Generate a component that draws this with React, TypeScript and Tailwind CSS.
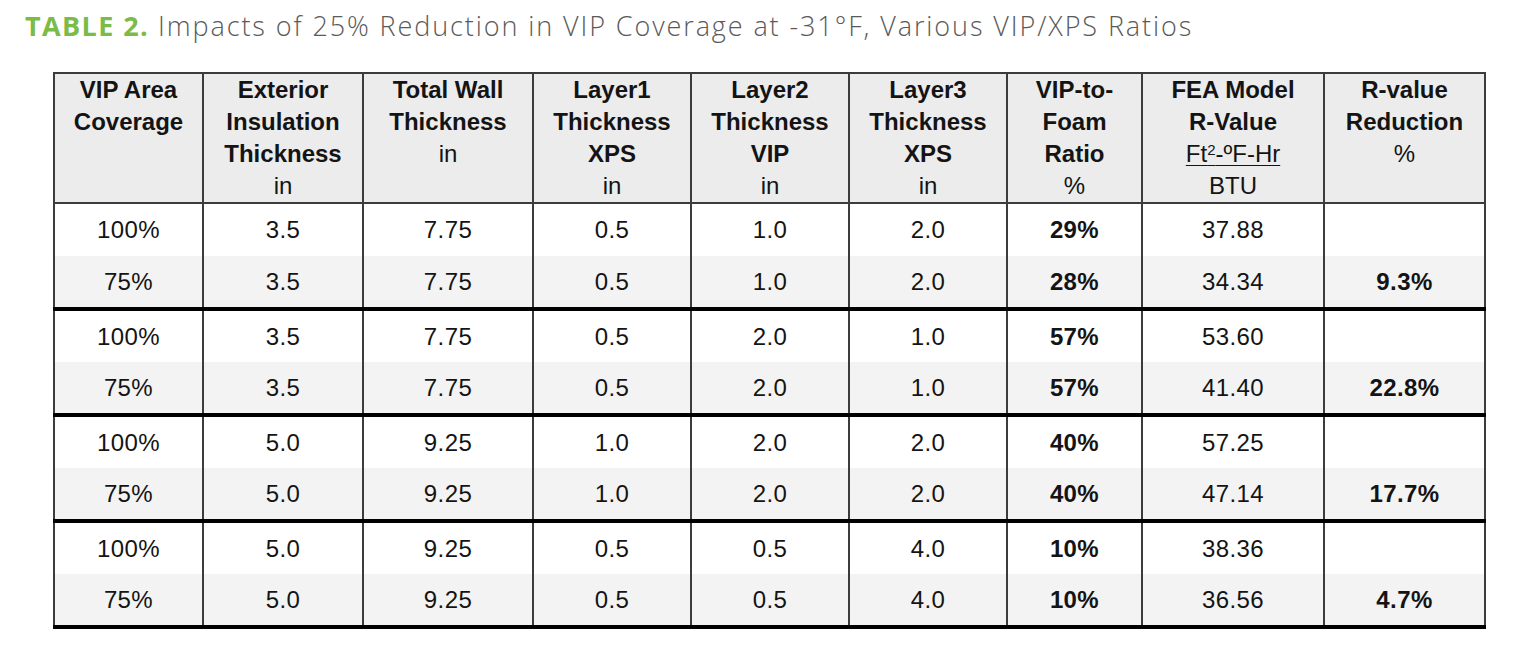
import React from "react";

type Row = {
  cov: string;
  ext: string;
  total: string;
  l1: string;
  l2: string;
  l3: string;
  ratio: string;
  r: string;
  red: string;
};

const groups: Row[][] = [
  [
    { cov: "100%", ext: "3.5", total: "7.75", l1: "0.5", l2: "1.0", l3: "2.0", ratio: "29%", r: "37.88", red: "" },
    { cov: "75%", ext: "3.5", total: "7.75", l1: "0.5", l2: "1.0", l3: "2.0", ratio: "28%", r: "34.34", red: "9.3%" },
  ],
  [
    { cov: "100%", ext: "3.5", total: "7.75", l1: "0.5", l2: "2.0", l3: "1.0", ratio: "57%", r: "53.60", red: "" },
    { cov: "75%", ext: "3.5", total: "7.75", l1: "0.5", l2: "2.0", l3: "1.0", ratio: "57%", r: "41.40", red: "22.8%" },
  ],
  [
    { cov: "100%", ext: "5.0", total: "9.25", l1: "1.0", l2: "2.0", l3: "2.0", ratio: "40%", r: "57.25", red: "" },
    { cov: "75%", ext: "5.0", total: "9.25", l1: "1.0", l2: "2.0", l3: "2.0", ratio: "40%", r: "47.14", red: "17.7%" },
  ],
  [
    { cov: "100%", ext: "5.0", total: "9.25", l1: "0.5", l2: "0.5", l3: "4.0", ratio: "10%", r: "38.36", red: "" },
    { cov: "75%", ext: "5.0", total: "9.25", l1: "0.5", l2: "0.5", l3: "4.0", ratio: "10%", r: "36.56", red: "4.7%" },
  ],
];

const widths = [149, 160, 170, 158, 158, 158, 135, 182, 161];

function Head({ bold, unit }: { bold: string[]; unit?: React.ReactNode[] }) {
  return (
    <th className="border-2 border-[#3c3c3c] bg-[#ececec] align-top text-center font-normal">
      {bold.map((b) => (
        <div key={b} className="font-bold leading-[32px]">
          {b}
        </div>
      ))}
      {unit?.map((u, i) => (
        <div key={i} className="h-[32px] leading-[32px]">
          {u}
        </div>
      ))}
    </th>
  );
}

export default function App() {
  return (
    <div className="w-[1536px] h-[671px] bg-white overflow-hidden">
      {/* Caption */}
      <div className="pl-[25px] pt-[8px] h-[72px] text-[27px] leading-[36px] text-[#5a5a5a] font-light tracking-[1.9px] whitespace-nowrap [font-family:'Open_Sans',sans-serif]">
        <span className="font-bold text-[#7bbb48] tracking-[1.4px]">TABLE 2.</span> Impacts of 25% Reduction in VIP Coverage at -31°F, Various VIP/XPS Ratios
      </div>

      {/* Table */}
      <div className="pl-[53px]">
        <table className="table-fixed border-collapse w-[1431px] text-[24px] text-[#141414] [font-family:'Liberation_Sans',Arial,sans-serif]">
          <colgroup>
            {widths.map((w, i) => (
              <col key={i} style={{ width: w }} />
            ))}
          </colgroup>
          <thead>
            <tr className="h-[130px]">
              <Head bold={["VIP Area", "Coverage"]} />
              <Head bold={["Exterior", "Insulation", "Thickness"]} unit={["in"]} />
              <Head bold={["Total Wall", "Thickness"]} unit={["in"]} />
              <Head bold={["Layer1", "Thickness", "XPS"]} unit={["in"]} />
              <Head bold={["Layer2", "Thickness", "VIP"]} unit={["in"]} />
              <Head bold={["Layer3", "Thickness", "XPS"]} unit={["in"]} />
              <Head bold={["VIP-to-", "Foam", "Ratio"]} unit={["%"]} />
              <Head
                bold={["FEA Model", "R-Value"]}
                unit={[
                  <span className="underline underline-offset-[3px] decoration-1">
                    Ft<span className="text-[15px] leading-none relative -top-[7px]">2</span>-ºF-Hr
                  </span>,
                  "BTU",
                ]}
              />
              <Head bold={["R-value", "Reduction"]} unit={["%"]} />
            </tr>
          </thead>
          {groups.map((g, gi) => (
            <tbody key={gi} className="border-b-4 border-b-black">
              {g.map((r, ri) => {
                const cells = [r.cov, r.ext, r.total, r.l1, r.l2, r.l3, r.ratio, r.r, r.red];
                return (
                  <tr key={ri} className={ri === 0 ? "h-[53px] bg-white" : "h-[53px] bg-[#f3f3f3]"}>
                    {cells.map((c, ci) => (
                      <td
                        key={ci}
                        className={
                          "border-x-2 border-x-[#3c3c3c] text-center tracking-[0.4px] " +
                          (ci === 6 || ci === 8 ? "font-bold" : "")
                        }
                      >
                        {c}
                      </td>
                    ))}
                  </tr>
                );
              })}
            </tbody>
          ))}
        </table>
      </div>
    </div>
  );
}
